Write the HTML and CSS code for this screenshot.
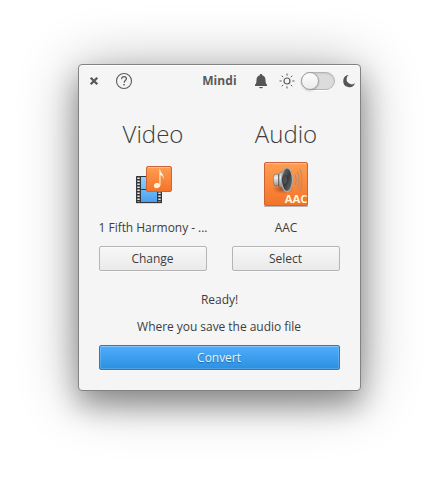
FILE: index.html
```html
<!DOCTYPE html>
<html lang="en">
<head>
<meta charset="utf-8">
<title>Mindi</title>
<link rel="stylesheet" href="styles.css">
</head>
<body>
<main class="window">
  <header class="titlebar">
    <svg class="icon close" viewBox="0 0 16 16"><path d="M4.700 4.700l6.600 6.600M11.300 4.700l-6.600 6.600" stroke="#5a5a5a" stroke-width="2.300"/></svg>
    <svg class="icon help" viewBox="0 0 18 18"><circle cx="9" cy="9" r="7.500" fill="none" stroke="#5c5c5c" stroke-width="1.100"/><path d="M6.600 7.100C6.500 5.500 7.600 4.700 9 4.700s2.400.9 2.400 2.100c0 1.800-2.300 1.800-2.300 4" fill="none" stroke="#5c5c5c" stroke-width="1.200"/><rect x="8.300" y="12" width="1.500" height="1.400" fill="#5c5c5c"/></svg>
    <h1 class="title">Mindi</h1>
    <svg class="icon bell" viewBox="0 0 16 16" fill="#555"><path d="M8 1c.8 0 1.200.5 1.300 1.200C11.500 2.800 12.500 4.600 12.500 7c0 3 .5 3.700 1.500 4.700V13H2v-1.300c1-1 1.500-1.700 1.500-4.700 0-2.400 1-4.200 3.200-4.800C6.800 1.500 7.200 1 8 1zM6 14h4c-.3.800-1 1.300-2 1.300S6.300 14.800 6 14z"/></svg>
    <svg class="icon sun" viewBox="0 0 16 16" fill="none" stroke="#5c5c5c"><circle cx="8" cy="8" r="3" stroke-width="1.200"/><path d="M8 .5v2.200M8 13.300v2.200M.5 8h2.200M13.300 8h2.200M2.700 2.700l1.500 1.500M11.800 11.800l1.500 1.500M13.300 2.700l-1.500 1.500M4.200 11.800l-1.500 1.500"/></svg>
    <div class="switch"><span class="knob"></span></div>
    <svg class="icon moon" viewBox="0 0 16 16"><path d="M7.600 2A6.100 6.100 0 1 0 14 10.300A5 5 0 0 1 7.600 2z" fill="#555"/></svg>
  </header>
  <section class="columns">
    <div class="column">
      <h2>Video</h2>
      <svg class="art" viewBox="0 0 48 48">
        <defs>
          <linearGradient id="orange" x2="0" y2="1"><stop stop-color="#ff9e52"/><stop offset="1" stop-color="#f37329"/></linearGradient>
          <linearGradient id="blue" x2="0" y2="1"><stop stop-color="#8cd5ff"/><stop offset="1" stop-color="#4b9fee"/></linearGradient>
        </defs>
        <path d="M7 43.300h26" stroke="#000" stroke-opacity=".15"/>
        <rect x="7" y="16" width="26" height="27" rx=".5" fill="#33373a"/>
        <path d="M12 17h16v12H12zM12 30h16v12H12z" fill="url(#blue)"/>
        <path d="M9.500 17.500V42M30.500 17.500V42" stroke="#e8e8e8" stroke-width="2.400" stroke-dasharray="1.500 1.500"/>
        <rect x="17.500" y="6.500" width="25" height="25" rx="1.500" fill="url(#orange)" stroke="#cf6337"/>
        <path d="M19 7.600h22" stroke="#ffc28e"/>
        <ellipse cx="28" cy="25.600" rx="3.100" ry="2.600" fill="#fff3dc" transform="rotate(-15 28 25.600)"/>
        <path d="M30.400 25.500V9.200h.7c.4 4 4.400 5.200 3.700 10.300-.4-2.800-1.800-4-3.300-4.500v10.500z" fill="#fff3dc"/>
      </svg>
      <p class="name">1 Fifth Harmony - ...</p>
      <button class="button">Change</button>
    </div>
    <div class="column">
      <h2>Audio</h2>
      <svg class="art" viewBox="0 0 48 48">
        <defs>
          <linearGradient id="cone" x2="1" y2="1"><stop stop-color="#777"/><stop offset=".5" stop-color="#3b3b3b"/><stop offset="1" stop-color="#777"/></linearGradient>
          <linearGradient id="metal" x2="0" y2="1"><stop stop-color="#888"/><stop offset=".4" stop-color="#eee"/><stop offset="1" stop-color="#555"/></linearGradient>
          <radialGradient id="shade"><stop stop-color="#762f0b" stop-opacity=".7"/><stop offset="1" stop-color="#a44b19" stop-opacity="0"/></radialGradient>
        </defs>
        <path d="M2 46.200h44" stroke="#000" stroke-opacity=".25" stroke-width="1.500"/>
        <rect x="2.500" y="2.500" width="43" height="43" rx="1.500" fill="url(#orange)" stroke="#cf6337"/>
        <path d="M4 3.600h40" stroke="#ffc28e"/>
        <ellipse cx="21" cy="29" rx="11" ry="5" fill="url(#shade)"/>
        <path d="M12.500 14.500c2-.8 4 .3 5.500-1.500l6-5v24l-6-5.200c-1.500-1.500-3.500-.7-5.500-1.400-1.500-2-1.500-8.900 0-10.900z" fill="url(#metal)" stroke="#66584f" stroke-width=".5"/>
        <path d="M16.700 14v12" stroke="#5f5f5f" stroke-width="1.200"/>
        <ellipse cx="25" cy="19.800" rx="5.500" ry="11.900" fill="url(#cone)" stroke="#aaa" stroke-width="1.300"/>
        <ellipse cx="23" cy="20" rx="2.700" ry="4.300" fill="#4b5052" stroke="#2c2c2c" stroke-width=".6"/>
        <path d="M33 14.500c1.500 3 1.500 7.500 0 10.500M35.300 11.500c2.300 5 2.300 12 0 17M37.600 8.800c3 6.500 3 16 0 22.400" fill="none" stroke="#b28b75" stroke-width="1"/>
        <text class="badge" x="45.300" y="42.800" text-anchor="end">AAC</text>
      </svg>
      <p class="name">AAC</p>
      <button class="button">Select</button>
    </div>
  </section>
  <p class="status">Ready!</p>
  <p class="hint">Where you save the audio file</p>
  <button class="button primary">Convert</button>
</main>
</body>
</html>
```
FILE: styles.css
```css
* { box-sizing: border-box; }

body {
  margin: 0;
  height: 483px;
  padding: 64px 78px;
  overflow: hidden;
  background: #fff;
  color: #3d3d3d;
  font: 12px/17px "Open Sans", sans-serif;
  letter-spacing: -.04px;
}

h1, h2, p { margin: 0; }

.window {
  display: flex;
  flex-direction: column;
  width: 283px;
  height: 327px;
  padding: 0 20px 20px;
  border: 1px solid #828282;
  border-radius: 4px;
  background: #f5f5f5;
  box-shadow: inset 0 1px #fff, 0 14px 28px rgba(0, 0, 0, .33), 0 5px 60px rgba(0, 0, 0, .33);
}

.titlebar {
  display: flex;
  flex: none;
  align-items: center;
  height: 32px;
  margin: 0 -15px;
  padding-left: 2px;
}

.icon { display: block; flex: none; width: 16px; height: 16px; }
.help { width: 18px; height: 18px; margin-left: 13px; }
.title {
  flex: none;
  width: 42px;
  margin: -1px 0 0 65.500px;
  color: #5a5a5a;
  font-size: 12px;
  font-weight: 700;
  line-height: 17px;
  letter-spacing: .1px;
  text-align: center;
  white-space: nowrap;
}
.bell { margin-left: 12.500px; }
.sun { margin-left: 9.500px; }

.switch {
  flex: none;
  width: 34px;
  height: 18px;
  margin-left: 6.500px;
  border: 1px solid #b5b5b5;
  border-radius: 9px;
  background: #dcdcdc;
  box-shadow: inset 0 1px 2px rgba(0, 0, 0, .1), 0 1px #fff;
}
.knob {
  display: block;
  width: 18px;
  height: 18px;
  margin: -1px;
  border: 1px solid #a0a0a0;
  border-radius: 50%;
  background: linear-gradient(#fdfdfd, #ececec);
  box-shadow: 0 1px 2px rgba(0, 0, 0, .2);
}
.moon { margin-left: 6px; }

.columns {
  display: grid;
  grid-template-columns: 108px 108px;
  gap: 25px;
  margin-top: 20px;
}
.column { display: flex; flex-direction: column; align-items: center; }
.column h2 {
  height: 33px;
  font-size: 24px;
  font-weight: 300;
  line-height: 33px;
  letter-spacing: 0;
}
.art { width: 48px; height: 48px; margin-top: 10px; }
.badge { fill: #fff6df; font: 700 11.300px "Open Sans", sans-serif; }
.name { margin-top: 11px; white-space: nowrap; }

.button {
  width: 100%;
  height: 25px;
  margin-top: 10px;
  padding: 0 1px 0 0;
  border: 1px solid #b5b5b5;
  border-radius: 2px;
  background: linear-gradient(#f7f7f7, #eaeaea);
  box-shadow: inset 0 1px #fbfbfb, 0 1px #f9f9f9;
  color: #3d3d3d;
  font: inherit;
  letter-spacing: inherit;
}
.status, .hint { text-align: center; }
.status { margin-top: 20px; }
.hint { margin-top: 10px; padding-right: 1px; }
.primary {
  flex: none;
  border-color: #217dcc;
  background: linear-gradient(#50acfb, #2c90e2);
  box-shadow: inset 0 0 0 1px rgba(255, 255, 255, .16), inset 0 1px rgba(255, 255, 255, .18), 0 1px #fafafa;
  color: #e9f4fd;
  text-shadow: 0 1px 1px rgba(0, 0, 0, .35);
}
```
